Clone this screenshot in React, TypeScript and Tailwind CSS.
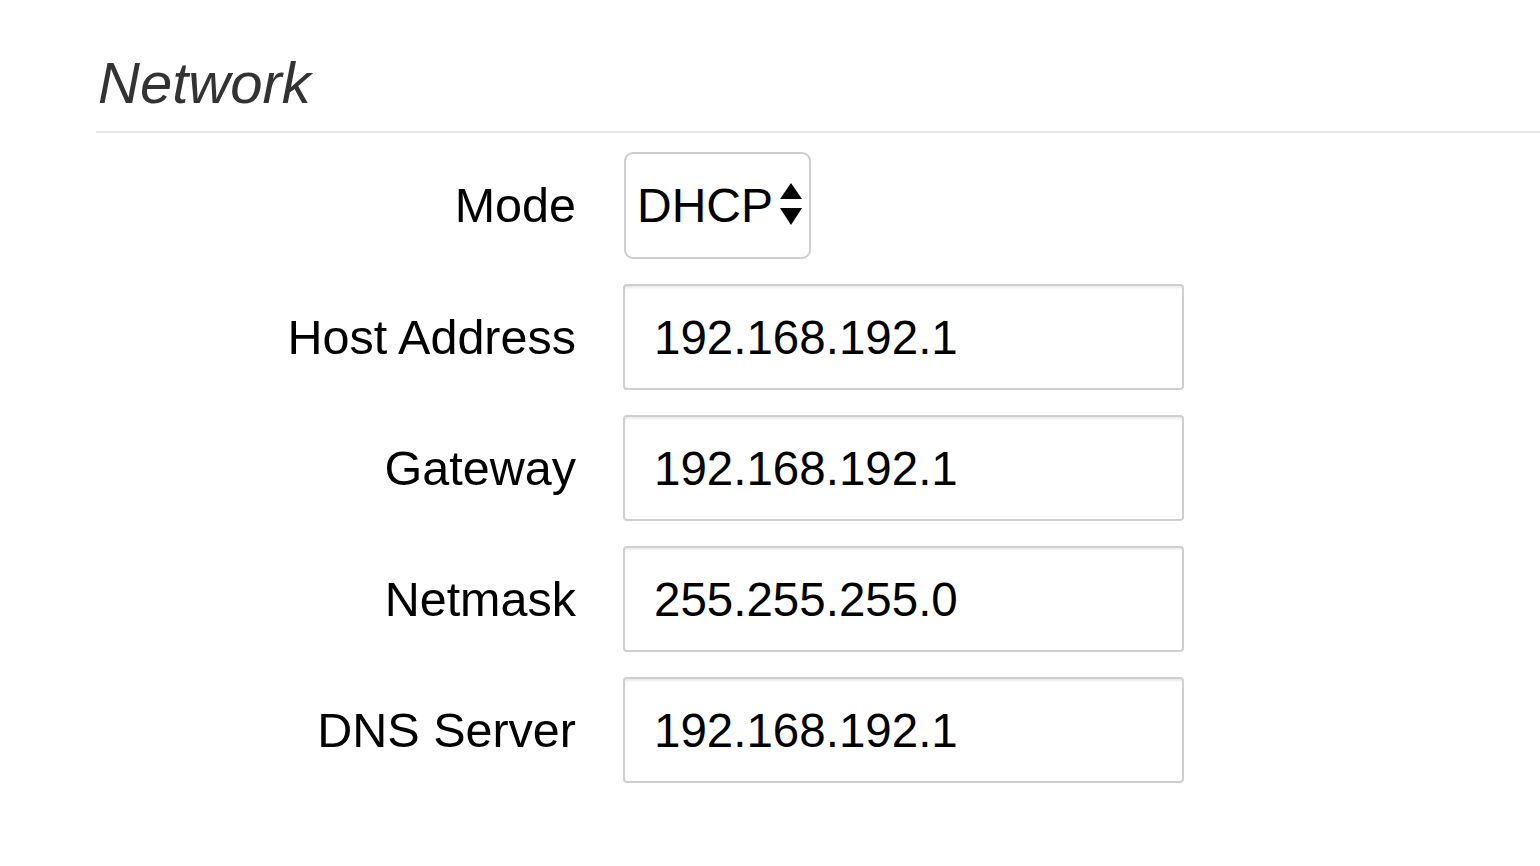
import { useState } from "react";

const fields = [
  { id: "host", label: "Host Address", value: "192.168.192.1" },
  { id: "gateway", label: "Gateway", value: "192.168.192.1" },
  { id: "netmask", label: "Netmask", value: "255.255.255.0" },
  { id: "dns", label: "DNS Server", value: "192.168.192.1" },
];

const labelClass =
  "w-[480px] shrink-0 text-right text-[48.5px] leading-none text-black";

function SelectArrows() {
  return (
    <svg
      width="22"
      height="43"
      viewBox="0 0 22 43"
      className="pointer-events-none absolute right-[9px] top-[31px]"
    >
      <polygon points="11,0 22,16 0,16" fill="#000" />
      <polygon points="0,25 22,25 11,42" fill="#000" />
    </svg>
  );
}

export default function App() {
  const [mode, setMode] = useState("DHCP");
  const [values, setValues] = useState<Record<string, string>>(
    Object.fromEntries(fields.map((f) => [f.id, f.value]))
  );

  return (
    <div
      className="min-h-screen bg-white pl-[96px]"
      style={{ fontFamily: '"Liberation Sans", Arial, sans-serif' }}
    >
      <fieldset>
        <legend className="w-full border-b-2 border-[#e5e5e5] pt-[51px] pb-[16px]">
          <span className="block pl-[2px] text-[58px] leading-[64px] italic text-[#333]">
            Network
          </span>
        </legend>

        <div className="mt-[19px] flex flex-col gap-[25px]">
          <div className="flex items-center gap-[47px]">
            <label htmlFor="mode" className={labelClass}>
              Mode
            </label>
            <div className="relative ml-[1px]">
              <select
                id="mode"
                value={mode}
                onChange={(e) => setMode(e.target.value)}
                className="h-[107px] w-[187px] appearance-none rounded-[9px] border-2 border-[#cfcfcf] bg-white pl-[11px] text-[48px] text-black outline-none"
              >
                <option value="DHCP">DHCP</option>
                <option value="Static">Static</option>
              </select>
              <SelectArrows />
            </div>
          </div>

          {fields.map((f) => (
            <div key={f.id} className="flex items-center gap-[47px]">
              <label htmlFor={f.id} className={labelClass}>
                {f.label}
              </label>
              <input
                id={f.id}
                type="text"
                value={values[f.id]}
                onChange={(e) =>
                  setValues((prev) => ({ ...prev, [f.id]: e.target.value }))
                }
                className="h-[106px] w-[561px] rounded-[4px] border-2 border-[#cfcfcf] bg-white pl-[29px] text-[47.5px] text-black shadow-[inset_0_2px_2px_rgba(0,0,0,0.075)] outline-none"
              />
            </div>
          ))}
        </div>
      </fieldset>
    </div>
  );
}
